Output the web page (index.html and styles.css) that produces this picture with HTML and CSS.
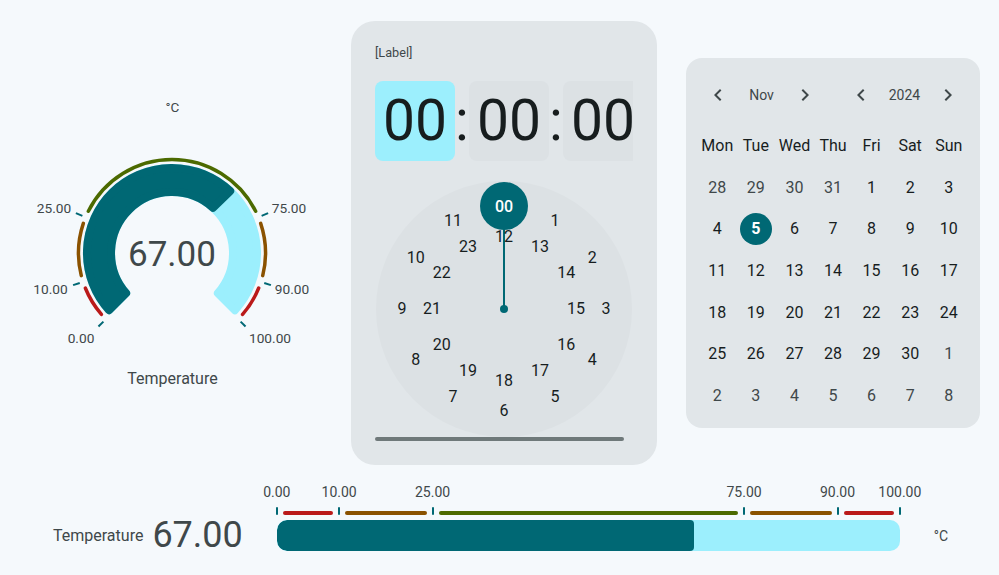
FILE: index.html
```html
<!DOCTYPE html>
<html lang="en">
<head>
<meta charset="utf-8">
<title>Gauges, time picker and calendar</title>
<link rel="stylesheet" href="styles.css">
</head>
<body>
<main class="page">
  <section class="top-row">
    <div class="radial">
      <div class="radial-unit">°C</div>
      <svg class="radial-svg" width="299" height="228" viewBox="0 0 299 228">
        <g class="rg-ranges">
          <path class="rg-red" d="M78.43 192.35 A93.5 93.5 0 0 1 62.31 166.03"/>
          <path class="rg-brown" d="M58.28 153.62 A93.5 93.5 0 0 1 60.33 101.33"/>
          <path class="rg-green" d="M65.33 89.28 A93.5 93.5 0 0 1 232.67 89.28"/>
          <path class="rg-brown" d="M237.67 101.33 A93.5 93.5 0 0 1 239.72 153.62"/>
          <path class="rg-red" d="M235.69 166.03 A93.5 93.5 0 0 1 219.57 192.35"/>
        </g>
        <g class="rg-ticks">
          <line x1="80.41" y1="199.59" x2="75.46" y2="204.54"/>
          <line x1="56.74" y1="160.97" x2="50.09" y2="163.14"/>
          <line x1="59.38" y1="93.88" x2="52.91" y2="91.20"/>
          <line x1="238.62" y1="93.88" x2="245.09" y2="91.20"/>
          <line x1="241.26" y1="160.97" x2="247.91" y2="163.14"/>
          <line x1="217.59" y1="199.59" x2="222.54" y2="204.54"/>
        </g>
        <path class="rg-track" d="M86.13 188.21 A85 85 0 1 1 211.87 188.21 L194.86 171.22 A61 61 0 1 0 103.14 171.22 Z"/>
        <path class="rg-fill" d="M86.13 188.21 A85 85 0 0 1 207.18 69.03 L189.92 85.77 A61 61 0 0 0 103.14 171.22 Z"/>
        <g class="rg-labels">
          <text x="58" y="220.8">0.00</text>
          <text x="27.5" y="171.8">10.00</text>
          <text x="31" y="90.8">25.00</text>
          <text x="266" y="90.8">75.00</text>
          <text x="269" y="171.8">90.00</text>
          <text x="247" y="220.8">100.00</text>
        </g>
        <text class="rg-value" x="149" y="144">67.00</text>
      </svg>
      <div class="radial-title">Temperature</div>
    </div>

    <div class="timepicker">
      <div class="tp-label">[Label]</div>
      <div class="tp-body">
        <div class="tp-fields">
          <div class="tp-field is-selected">00</div>
          <div class="tp-sep">:</div>
          <div class="tp-field">00</div>
          <div class="tp-sep">:</div>
          <div class="tp-field">00</div>
        </div>
        <div class="clock">
          <div class="clock-hand"></div>
          <div class="clock-pivot"></div>
          <span class="clock-num" style="left:179px;top:39.67px">1</span>
          <span class="clock-num" style="left:216.33px;top:77px">2</span>
          <span class="clock-num" style="left:230px;top:128px">3</span>
          <span class="clock-num" style="left:216.33px;top:179px">4</span>
          <span class="clock-num" style="left:179px;top:216.33px">5</span>
          <span class="clock-num" style="left:128px;top:230px">6</span>
          <span class="clock-num" style="left:77px;top:216.33px">7</span>
          <span class="clock-num" style="left:39.67px;top:179px">8</span>
          <span class="clock-num" style="left:26px;top:128px">9</span>
          <span class="clock-num" style="left:39.67px;top:77px">10</span>
          <span class="clock-num" style="left:77px;top:39.67px">11</span>
          <span class="clock-num" style="left:128px;top:56px">12</span>
          <span class="clock-num" style="left:164px;top:65.65px">13</span>
          <span class="clock-num" style="left:190.35px;top:92px">14</span>
          <span class="clock-num" style="left:200px;top:128px">15</span>
          <span class="clock-num" style="left:190.35px;top:164px">16</span>
          <span class="clock-num" style="left:164px;top:190.35px">17</span>
          <span class="clock-num" style="left:128px;top:200px">18</span>
          <span class="clock-num" style="left:92px;top:190.35px">19</span>
          <span class="clock-num" style="left:65.65px;top:164px">20</span>
          <span class="clock-num" style="left:56px;top:128px">21</span>
          <span class="clock-num" style="left:65.65px;top:92px">22</span>
          <span class="clock-num" style="left:92px;top:65.65px">23</span>
          <div class="clock-sel">00</div>
        </div>
      </div>
      <div class="tp-scrollbar"><div class="tp-thumb"></div></div>
    </div>

    <div class="calendar">
      <div class="cal-head">
        <div class="cal-nav">
          <span class="cal-btn"><svg viewBox="0 0 24 24"><path d="M15.41 7.41L14 6l-6 6 6 6 1.41-1.41L10.83 12z"/></svg></span>
          <span class="cal-title">Nov</span>
          <span class="cal-btn"><svg viewBox="0 0 24 24"><path d="M10 6L8.59 7.41 13.17 12l-4.58 4.59L10 18l6-6z"/></svg></span>
        </div>
        <div class="cal-nav">
          <span class="cal-btn"><svg viewBox="0 0 24 24"><path d="M15.41 7.41L14 6l-6 6 6 6 1.41-1.41L10.83 12z"/></svg></span>
          <span class="cal-title">2024</span>
          <span class="cal-btn"><svg viewBox="0 0 24 24"><path d="M10 6L8.59 7.41 13.17 12l-4.58 4.59L10 18l6-6z"/></svg></span>
        </div>
      </div>
      <div class="cal-grid">
        <span class="cal-cell cal-wd">Mon</span><span class="cal-cell cal-wd">Tue</span><span class="cal-cell cal-wd">Wed</span><span class="cal-cell cal-wd">Thu</span><span class="cal-cell cal-wd">Fri</span><span class="cal-cell cal-wd">Sat</span><span class="cal-cell cal-wd">Sun</span>
        <span class="cal-cell is-out">28</span><span class="cal-cell is-out">29</span><span class="cal-cell is-out">30</span><span class="cal-cell is-out">31</span><span class="cal-cell">1</span><span class="cal-cell">2</span><span class="cal-cell">3</span>
        <span class="cal-cell">4</span><span class="cal-cell is-selected"><span>5</span></span><span class="cal-cell">6</span><span class="cal-cell">7</span><span class="cal-cell">8</span><span class="cal-cell">9</span><span class="cal-cell">10</span>
        <span class="cal-cell">11</span><span class="cal-cell">12</span><span class="cal-cell">13</span><span class="cal-cell">14</span><span class="cal-cell">15</span><span class="cal-cell">16</span><span class="cal-cell">17</span>
        <span class="cal-cell">18</span><span class="cal-cell">19</span><span class="cal-cell">20</span><span class="cal-cell">21</span><span class="cal-cell">22</span><span class="cal-cell">23</span><span class="cal-cell">24</span>
        <span class="cal-cell">25</span><span class="cal-cell">26</span><span class="cal-cell">27</span><span class="cal-cell">28</span><span class="cal-cell">29</span><span class="cal-cell">30</span><span class="cal-cell is-out">1</span>
        <span class="cal-cell is-out">2</span><span class="cal-cell is-out">3</span><span class="cal-cell is-out">4</span><span class="cal-cell is-out">5</span><span class="cal-cell is-out">6</span><span class="cal-cell is-out">7</span><span class="cal-cell is-out">8</span>
      </div>
    </div>
  </section>

  <section class="linear">
    <div class="lin-scale">
      <span class="lin-label" style="left:0%">0.00</span>
      <span class="lin-label" style="left:10%">10.00</span>
      <span class="lin-label" style="left:25%">25.00</span>
      <span class="lin-label" style="left:75%">75.00</span>
      <span class="lin-label" style="left:90%">90.00</span>
      <span class="lin-label" style="left:100%">100.00</span>
      <span class="lin-tick" style="left:0%"></span>
      <span class="lin-tick" style="left:10%"></span>
      <span class="lin-tick" style="left:25%"></span>
      <span class="lin-tick" style="left:75%"></span>
      <span class="lin-tick" style="left:90%"></span>
      <span class="lin-tick" style="left:100%"></span>
      <span class="lin-range is-red" style="left:0%;width:10%"></span>
      <span class="lin-range is-brown" style="left:10%;width:15%"></span>
      <span class="lin-range is-green" style="left:25%;width:50%"></span>
      <span class="lin-range is-brown" style="left:75%;width:15%"></span>
      <span class="lin-range is-red" style="left:90%;width:10%"></span>
    </div>
    <div class="lin-title">Temperature</div>
    <div class="lin-value">67.00</div>
    <div class="lin-bar"><div class="lin-fill" style="width:67%"></div></div>
    <div class="lin-unit">°C</div>
  </section>
</main>
</body>
</html>
```

FILE: styles.css
```css
* { box-sizing: border-box; }

html, body { margin: 0; }

body {
  width: 999px;
  height: 575px;
  overflow: hidden;
  background: #f5f9fc;
  color: #171d1e;
  font-family: Roboto, "Noto Sans", "Liberation Sans", sans-serif;
}

.page { padding-top: 21px; }

.top-row {
  display: flex;
  align-items: center;
  gap: 29px;
  padding-left: 23px;
}

/* ---------- radial gauge ---------- */
.radial {
  width: 299px;
  display: flex;
  flex-direction: column;
  align-items: center;
}
.radial-unit {
  font-size: 13.5px;
  line-height: 16px;
  color: #3f484a;
}
.radial-svg {
  display: block;
  margin-top: 7px;
}
.radial-title {
  margin-top: 19px;
  font-size: 16px;
  line-height: 19px;
  color: #3f484a;
}
.rg-ranges path {
  fill: none;
  stroke-width: 3.5;
  stroke-linecap: round;
}
.rg-red { stroke: #ba1a1a; }
.rg-brown { stroke: #8a5200; }
.rg-green { stroke: #4c6a00; }
.rg-ticks line {
  stroke: #006874;
  stroke-width: 2;
}
.rg-track {
  fill: #9ceffd;
  stroke: #9ceffd;
  stroke-width: 8;
  stroke-linejoin: round;
}
.rg-fill {
  fill: #006874;
  stroke: #006874;
  stroke-width: 8;
  stroke-linejoin: round;
}
.rg-labels text {
  font-size: 13.7px;
  fill: #3f484a;
  text-anchor: middle;
}
.rg-value {
  font-size: 35px;
  fill: #3f484a;
  text-anchor: middle;
}

/* ---------- time picker ---------- */
.timepicker {
  width: 306px;
  flex: 0 0 306px;
  padding: 24px;
  background: #e1e6e9;
  border-radius: 24px;
}
.tp-label {
  font-size: 12.7px;
  line-height: 16px;
  color: #3f484a;
}
.tp-body {
  width: 258px;
  margin-top: 20px;
  overflow: hidden;
}
.tp-fields { display: flex; }
.tp-field {
  flex: 0 0 80px;
  height: 80px;
  border-radius: 8px;
  background: #dce1e4;
  font-size: 57px;
  line-height: 80px;
  text-align: center;
  color: #171d1e;
}
.tp-field.is-selected { background: #9ceffd; }
.tp-sep {
  flex: 0 0 14px;
  font-size: 57px;
  line-height: 80px;
  text-align: center;
  color: #171d1e;
}
.clock {
  position: relative;
  width: 256px;
  height: 256px;
  margin: 20px auto 0;
  border-radius: 50%;
  background: #dce1e4;
}
.clock-hand {
  position: absolute;
  left: 127px;
  top: 26px;
  width: 2px;
  height: 102px;
  background: #006874;
}
.clock-pivot {
  position: absolute;
  left: 124px;
  top: 124px;
  width: 8px;
  height: 8px;
  border-radius: 50%;
  background: #006874;
}
.clock-num {
  position: absolute;
  transform: translate(-50%, -50%);
  font-size: 16px;
  line-height: 20px;
  color: #171d1e;
  white-space: nowrap;
}
.clock-sel {
  position: absolute;
  left: 104px;
  top: 1px;
  width: 48px;
  height: 48px;
  border-radius: 50%;
  background: #006874;
  color: #ffffff;
  display: flex;
  align-items: center;
  justify-content: center;
  font-size: 16px;
  font-weight: 500;
}
.tp-scrollbar {
  width: 258px;
  height: 4px;
}
.tp-thumb {
  width: 249px;
  height: 4px;
  border-radius: 2px;
  background: #6f797a;
}

/* ---------- calendar ---------- */
.calendar {
  width: 294px;
  flex: 0 0 294px;
  padding: 17px 12px 12px;
  background: #e1e6e9;
  border-radius: 16px;
}
.cal-head {
  display: flex;
  justify-content: space-between;
  height: 40px;
}
.cal-nav {
  width: 127px;
  display: flex;
  align-items: center;
}
.cal-btn {
  width: 40px;
  height: 40px;
  display: flex;
  align-items: center;
  justify-content: center;
  color: #3f484a;
}
.cal-btn svg {
  width: 24px;
  height: 24px;
  fill: currentColor;
}
.cal-title {
  flex: 1;
  text-align: center;
  font-size: 14px;
  color: #3f484a;
}
.cal-grid {
  margin-top: 10px;
  display: grid;
  grid-template-columns: repeat(7, 1fr);
  grid-auto-rows: 41.67px;
}
.cal-cell {
  display: flex;
  align-items: center;
  justify-content: center;
  font-size: 16px;
  color: #171d1e;
}
.cal-cell.is-out { color: #3f484a; }
.cal-cell.is-selected span {
  width: 32px;
  height: 32px;
  border-radius: 50%;
  background: #006874;
  color: #ffffff;
  font-weight: 700;
  display: flex;
  align-items: center;
  justify-content: center;
}

/* ---------- linear gauge ---------- */
.linear {
  display: grid;
  grid-template-columns: auto auto 623px auto;
  grid-template-rows: 36px 31px;
  justify-content: start;
  align-items: center;
  margin-top: 19px;
  padding-left: 53px;
}
.lin-scale {
  grid-column: 3;
  grid-row: 1;
  align-self: stretch;
  position: relative;
}
.lin-label {
  position: absolute;
  top: 0;
  transform: translateX(-50%);
  font-size: 14px;
  line-height: 16px;
  color: #3f484a;
  white-space: nowrap;
}
.lin-tick {
  position: absolute;
  top: 23px;
  width: 2px;
  height: 8px;
  margin-left: -1px;
  border-radius: 1px;
  background: #006874;
}
.lin-range {
  position: absolute;
  top: 27px;
  height: 4px;
}
.lin-range::before {
  content: "";
  position: absolute;
  left: 6px;
  right: 6px;
  top: 0;
  bottom: 0;
  border-radius: 2px;
  background: currentColor;
}
.lin-range.is-red { color: #ba1a1a; }
.lin-range.is-brown { color: #8a5200; }
.lin-range.is-green { color: #4c6a00; }
.lin-title {
  grid-column: 1;
  grid-row: 2;
  margin-right: 9px;
  font-size: 16px;
  line-height: 20px;
  color: #3f484a;
}
.lin-value {
  grid-column: 2;
  grid-row: 2;
  margin-right: 34px;
  font-size: 36px;
  line-height: 31px;
  color: #3f484a;
}
.lin-bar {
  grid-column: 3;
  grid-row: 2;
  height: 31px;
  border-radius: 10px;
  background: #9ceffd;
  overflow: hidden;
}
.lin-fill {
  height: 100%;
  border-radius: 10px 4px 4px 10px;
  background: #006874;
}
.lin-unit {
  grid-column: 4;
  grid-row: 2;
  margin-left: 34px;
  font-size: 14px;
  line-height: 16px;
  color: #3f484a;
}
```
